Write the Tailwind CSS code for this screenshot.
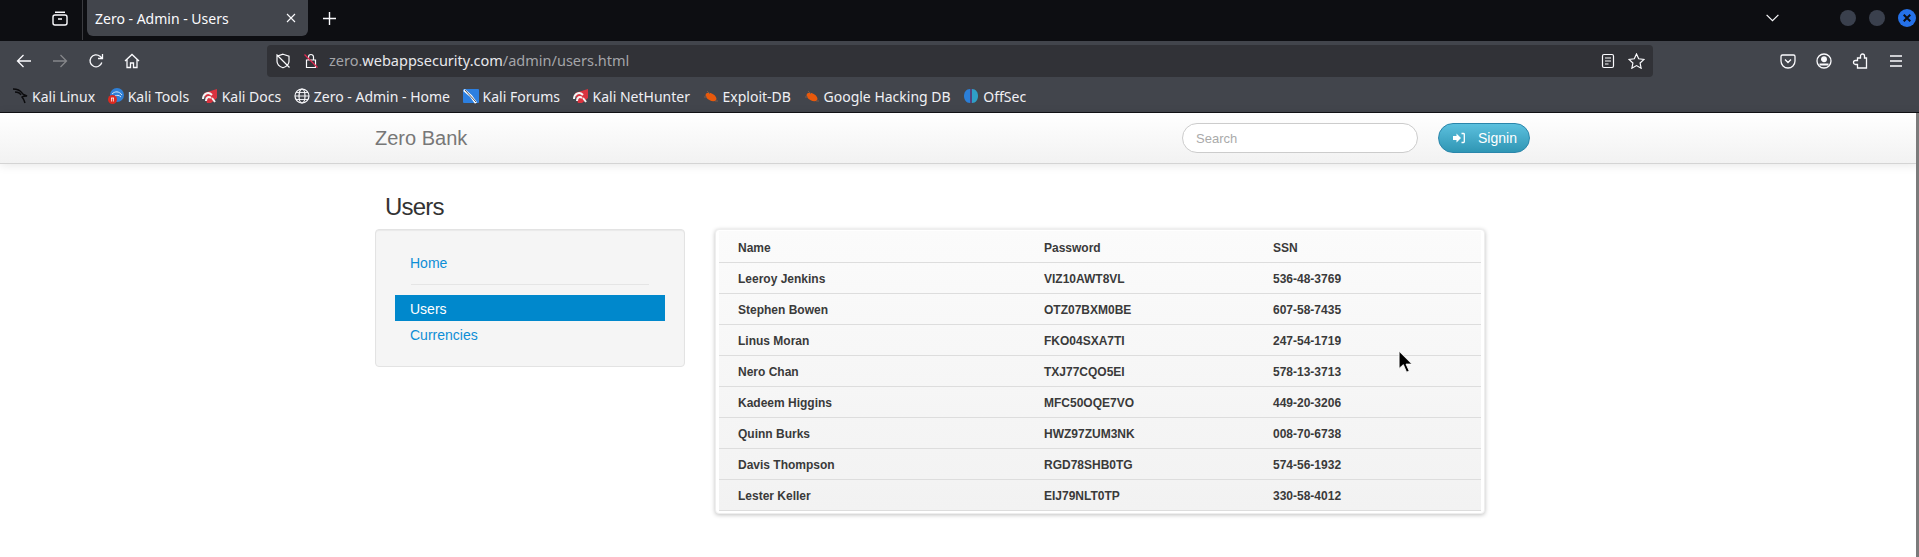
<!DOCTYPE html>
<html lang="en">
<head>
  <meta charset="UTF-8" />
  <title>Zero - Admin - Users</title>
  <script src="https://cdn.jsdelivr.net/npm/@tailwindcss/browser@4"></script>
</head>
<body class="relative h-[557px] overflow-hidden bg-white font-['Liberation_Sans',sans-serif]">
  <!-- TAB BAR -->
  <div class="flex h-[41px] items-start bg-[#0d0e12] font-['Noto_Sans',sans-serif] text-[#fbfbfe]">
    <div class="ml-[51px] mt-[9px] w-[18px]">
      <svg width="18" height="18" viewBox="0 0 18 18" fill="none" stroke="#fbfbfe" stroke-width="1.4"><rect x="2" y="6" width="14" height="10" rx="2"/><path d="M4 3.2h10M7 10h4"/></svg>
    </div>
    <div class="ml-[13px] h-[40px] w-px bg-[#3a3b40]"></div>
    <div class="ml-1 flex h-9 w-[221px] items-center justify-between rounded-b-md bg-[#42454c] pl-2 pr-3">
      <span class="text-[14px]">Zero - Admin - Users</span>
      <svg width="10" height="10" viewBox="0 0 10 10" stroke="#fbfbfe" stroke-width="1.1"><path d="M1 1l8 8M9 1l-8 8"/></svg>
    </div>
    <svg class="ml-[15px] mt-3" width="13" height="13" viewBox="0 0 13 13" stroke="#fbfbfe" stroke-width="1.4"><path d="M6.5 0v13M0 6.500h13"/></svg>
    <svg class="ml-[1430px] mt-[14px]" width="13" height="8" viewBox="0 0 13 8" fill="none" stroke="#fbfbfe" stroke-width="1.2"><path d="M.6.8l5.900 5.900L12.400.8"/></svg>
    <div class="ml-[61px] mt-[10px] flex gap-[13px]">
      <div class="size-4 rounded-full bg-[#3a404d]"></div>
      <div class="size-4 rounded-full bg-[#3a404d]"></div>
      <div class="flex size-[18px] -translate-y-px items-center justify-center rounded-full bg-[#2571e8]">
        <svg width="8" height="8" viewBox="0 0 8 8" stroke="#0d0e12" stroke-width="2"><path d="M.7.7l6.600 6.600M7.300.7L.7 7.300"/></svg>
      </div>
    </div>
  </div>

  <!-- TOOLBAR -->
  <div class="flex h-[38px] items-center bg-[#42454c] pt-[2px] font-['Noto_Sans',sans-serif]">
    <div class="ml-4 flex items-center gap-[20px]">
      <svg width="16" height="16" viewBox="0 0 16 16" fill="none" stroke="#fbfbfe" stroke-width="1.300"><path d="M15 8H1.500M7.500 2L1.500 8l6 6"/></svg>
      <svg width="16" height="16" viewBox="0 0 16 16" fill="none" stroke="#85868a" stroke-width="1.300"><path d="M1 8h13.500M8.500 2l6 6-6 6"/></svg>
      <svg width="16" height="16" viewBox="0 0 16 16" fill="none" stroke="#fbfbfe" stroke-width="1.300"><path d="M13.800 9.500A6 6 0 1 1 12 3.300L14.500 5.500M14.500 1v4.500H10"/></svg>
      <svg width="16" height="16" viewBox="0 0 16 16" fill="none" stroke="#fbfbfe" stroke-width="1.300"><path d="M1 8l7-6.500L15 8M3 6.500V14.500h3.500V10h3v4.500H13V6.500"/></svg>
    </div>
    <div class="ml-[127px] flex h-8 w-[1386px] items-center rounded bg-[#313237] pl-2 pr-2">
      <svg width="16" height="16" viewBox="0 0 16 16" fill="none" stroke="#fbfbfe" stroke-width="1.200"><path d="M8 1.200l6 2v5c0 3-2.500 5.300-6 6.600-3.500-1.300-6-3.600-6-6.600v-5zM1.500 1.500l13 13"/></svg>
      <svg class="ml-3" width="16" height="16" viewBox="0 0 16 16" fill="none" stroke-width="1.200"><path stroke="#fbfbfe" d="M3.500 7h9v7.500h-9zM5.500 7V4a2.500 2.500 0 0 1 5 0v3"/><path stroke="#e22850" d="M1.500 1.500l13 13"/></svg>
      <span class="ml-[10px] text-[14.500px] text-[#a4a5a9]">zero.<span class="text-[#e8e8ec]">webappsecurity.com</span>/admin/users.html</span>
      <div class="ml-auto flex items-center gap-[13px]">
        <svg width="14" height="16" viewBox="0 0 14 16" fill="none" stroke="#fbfbfe" stroke-width="1.200"><rect x="1.500" y="1.500" width="11" height="13" rx="1.500"/><path d="M4 5h6M4 8h6M4 11h3.500"/></svg>
        <svg width="17" height="16" viewBox="0 0 17 16" fill="none" stroke="#fbfbfe" stroke-width="1.200"><path d="M8.500 1l2.200 4.800 5.300.6-3.900 3.600 1 5.200-4.600-2.600-4.600 2.600 1-5.200L1 6.400l5.300-.6z"/></svg>
      </div>
    </div>
    <div class="ml-[127px] flex items-center gap-5">
      <svg width="16" height="16" viewBox="0 0 16 16" fill="none" stroke="#fbfbfe" stroke-width="1.300"><path d="M2.500 2h11A1.500 1.500 0 0 1 15 3.500V8a7 7 0 0 1-14 0V3.500A1.500 1.500 0 0 1 2.500 2zM5 6.500l3 3 3-3"/></svg>
      <svg width="16" height="16" viewBox="0 0 16 16" fill="none" stroke="#fbfbfe" stroke-width="1.300"><circle cx="8" cy="8" r="7"/><circle cx="8" cy="6.200" r="2.300" fill="#fbfbfe"/><path d="M3.500 11.500h9" stroke-width="2"/></svg>
      <svg width="16" height="16" viewBox="0 0 16 16" fill="none" stroke="#fbfbfe" stroke-width="1.300"><path d="M14.500 15H5.500v-3.500H3.500a2 2 0 0 1 0-4h2V5h3V3a2 2 0 0 1 4 0v2h2z"/></svg>
      <svg width="16" height="16" viewBox="0 0 16 16" stroke="#fbfbfe" stroke-width="1.300"><path d="M2 3h12M2 8h12M2 13h12"/></svg>
    </div>
  </div>

  <!-- BOOKMARKS -->
  <div class="flex h-[34px] items-center gap-[12.600px] border-b border-b-[#111216] bg-[#42454c] pt-px pl-3 font-['Noto_Sans',sans-serif] text-[14px] text-[#f0f0f4]">
    <div class="flex items-center gap-1">
      <svg width="16" height="16" viewBox="0 0 16 16" fill="none" stroke="#0b0b0d" stroke-width="1.500"><path d="M1 1c4 0 7 1 9 4 1 2 3 2 5 3-2 0-4 0-5 1 1 1 2 3 3 6M3 4c3 0 5 1 6 3"/></svg>
      <span>Kali Linux</span>
    </div>
    <div class="flex items-center gap-1">
      <svg width="16" height="16" viewBox="0 0 16 16"><circle cx="9" cy="7" r="7" fill="#2f80d8"/><path d="M4 6c3-3 7-3 10 1M7 8c2-1 4-1 6 1" fill="none" stroke="#dbe9f7" stroke-width="1"/><circle cx="4.500" cy="11.500" r="4.500" fill="#dc2a20"/><path d="M3 10h3M3.600 10v3.500M5.400 10v3.500" stroke="#fff" stroke-width=".8"/></svg>
      <span>Kali Tools</span>
    </div>
    <div class="flex items-center gap-1">
      <svg width="16" height="16" viewBox="0 0 16 16"><path d="M2 5L15 1v9l-6 5H5z" fill="#d9333f"/><path d="M1 11c0-5 5-8 9-4M4 13c0-4 3-5 5-3M10 10l3 4" fill="none" stroke="#f4f4f4" stroke-width="2"/></svg>
      <span>Kali Docs</span>
    </div>
    <div class="flex items-center gap-1">
      <svg width="16" height="16" viewBox="0 0 16 16" fill="none" stroke="#fbfbfe" stroke-width="1.200"><circle cx="8" cy="8" r="7"/><ellipse cx="8" cy="8" rx="3" ry="7"/><path d="M1 8h14M2 4.500h12M2 11.500h12" stroke-width=".9"/></svg>
      <span>Zero - Admin - Home</span>
    </div>
    <div class="flex items-center gap-1">
      <svg width="16" height="16" viewBox="0 0 16 16"><rect y="1" width="16" height="14" rx="1" fill="#2c7fe0"/><path d="M1 2l7 6 5 7" fill="none" stroke="#fff" stroke-width="2.500"/><path d="M2 2l11 12" stroke="#23252b" stroke-width=".8"/></svg>
      <span>Kali Forums</span>
    </div>
    <div class="flex items-center gap-1">
      <svg width="16" height="16" viewBox="0 0 16 16"><path d="M2 5L15 1v9l-6 5H5z" fill="#d9333f"/><path d="M1 11c0-5 5-8 9-4M4 13c0-4 3-5 5-3M10 10l3 4" fill="none" stroke="#f4f4f4" stroke-width="2"/></svg>
      <span>Kali NetHunter</span>
    </div>
    <div class="flex items-center gap-1">
      <svg width="16" height="16" viewBox="0 0 16 16"><ellipse cx="8" cy="9" rx="6" ry="3.500" transform="rotate(30 8 9)" fill="#e8590c"/><path d="M1 9h3M12 13l3 0M4 3l3 3" stroke="#7d5a48" stroke-width="1"/></svg>
      <span>Exploit-DB</span>
    </div>
    <div class="flex items-center gap-1">
      <svg width="16" height="16" viewBox="0 0 16 16"><ellipse cx="8" cy="9" rx="6" ry="3.500" transform="rotate(30 8 9)" fill="#e8590c"/><path d="M1 9h3M12 13l3 0M4 3l3 3" stroke="#7d5a48" stroke-width="1"/></svg>
      <span>Google Hacking DB</span>
    </div>
    <div class="flex items-center gap-1">
      <svg width="16" height="16" viewBox="0 0 16 16"><path d="M7 1C3 1 1 4.500 1 8s2 7 6 7z" fill="#2b7fd8"/><path d="M9 1c4 0 6 3.500 6 7s-2 7-6 7z" fill="#2f9fc8"/><path d="M7.600 1h.8v14h-.8z" fill="#6a3fc8"/></svg>
      <span>OffSec</span>
    </div>
  </div>

  <!-- PAGE HEADER -->
  <header class="h-[51px] border-b border-b-[#d4d4d4] bg-gradient-to-b from-white to-[#f2f2f2] shadow-[0_1px_10px_rgba(0,0,0,0.1)]">
    <div class="ml-[375px] flex h-[50px] w-[1155px] items-center">
      <span class="text-[20px] text-[#777]">Zero Bank</span>
      <input class="ml-auto h-[30px] w-[236px] rounded-[15px] border border-[#ccc] bg-white px-[13px] text-[13px] placeholder:text-[#aaa]" placeholder="Search" />
      <button class="ml-5 flex h-[30px] w-[92px] items-center rounded-[15px] border border-[#2a86ab] bg-gradient-to-b from-[#5bc0de] to-[#2f96b4] pl-[14px] text-[14px] text-white">
        <svg width="12" height="12" viewBox="0 0 12 12" fill="#fff"><path d="M0 4h3.500V1.500L8 6l-4.500 4.500V8H0z"/><path d="M8.500 1.500h2A.8.8 0 0 1 11.300 2.300v7.400a.8.8 0 0 1-.8.8h-2" fill="none" stroke="#fff" stroke-width="1.300"/></svg>
        <span class="ml-[13px]">Signin</span>
      </button>
    </div>
  </header>

  <!-- MAIN -->
  <main class="ml-[375px] w-[1110px]">
    <h1 class="mt-[29px] h-[36px] pl-[10px] text-[24px] leading-[28px] tracking-[-0.8px] text-[#333]">Users</h1>
    <div class="flex items-start gap-[30px]">
      <aside class="h-[138px] w-[310px] rounded border border-[#e3e3e3] bg-[#f5f5f5] p-[19px] text-[14px] leading-5 shadow-[inset_0_1px_1px_rgba(0,0,0,0.05)]">
        <a class="block pl-[15px] pt-[4px] text-[#0d8ed6]" href="#">Home</a>
        <div class="mx-4 mb-[10px] mt-[11px] h-px bg-[#e5e5e5]"></div>
        <a class="block h-[26px] bg-[#0088cc] pl-[15px] pt-[4px] text-white" href="#">Users</a>
        <a class="block pl-[15px] pt-[4px] text-[#0d8ed6]" href="#">Currencies</a>
      </aside>
      <div class="h-[285px] w-[770px] rounded border border-[#eee] bg-white px-[3px] pt-px shadow-[0_1px_4px_rgba(0,0,0,0.25)]">
        <table class="w-full table-fixed bg-gradient-to-b from-[#fbfbfb] to-[#f2f2f2] text-left text-[12px] font-bold text-[#3a3a3a]">
          <thead>
            <tr class="h-[31px] border-b border-b-[#ddd]"><th class="w-[325px] pl-[19px] pt-[4px]">Name</th><th class="w-[229px] pt-[4px]">Password</th><th class="pt-[4px]">SSN</th></tr>
          </thead>
          <tbody>
            <tr class="h-[31px] border-b border-b-[#ddd]"><td class="pl-[19px] pt-[2px]">Leeroy Jenkins</td><td class="pt-[2px]">VIZ10AWT8VL</td><td class="pt-[2px]">536-48-3769</td></tr>
            <tr class="h-[31px] border-b border-b-[#ddd]"><td class="pl-[19px] pt-[2px]">Stephen Bowen</td><td class="pt-[2px]">OTZ07BXM0BE</td><td class="pt-[2px]">607-58-7435</td></tr>
            <tr class="h-[31px] border-b border-b-[#ddd]"><td class="pl-[19px] pt-[2px]">Linus Moran</td><td class="pt-[2px]">FKO04SXA7TI</td><td class="pt-[2px]">247-54-1719</td></tr>
            <tr class="h-[31px] border-b border-b-[#ddd]"><td class="pl-[19px] pt-[2px]">Nero Chan</td><td class="pt-[2px]">TXJ77CQO5EI</td><td class="pt-[2px]">578-13-3713</td></tr>
            <tr class="h-[31px] border-b border-b-[#ddd]"><td class="pl-[19px] pt-[2px]">Kadeem Higgins</td><td class="pt-[2px]">MFC50OQE7VO</td><td class="pt-[2px]">449-20-3206</td></tr>
            <tr class="h-[31px] border-b border-b-[#ddd]"><td class="pl-[19px] pt-[2px]">Quinn Burks</td><td class="pt-[2px]">HWZ97ZUM3NK</td><td class="pt-[2px]">008-70-6738</td></tr>
            <tr class="h-[31px] border-b border-b-[#ddd]"><td class="pl-[19px] pt-[2px]">Davis Thompson</td><td class="pt-[2px]">RGD78SHB0TG</td><td class="pt-[2px]">574-56-1932</td></tr>
            <tr class="h-[31px] border-b border-b-[#ddd]"><td class="pl-[19px] pt-[2px]">Lester Keller</td><td class="pt-[2px]">EIJ79NLT0TP</td><td class="pt-[2px]">330-58-4012</td></tr>
          </tbody>
        </table>
      </div>
    </div>
  </main>

  <!-- SCROLLBAR + CURSOR -->
  <div class="absolute bottom-0 right-0 top-[113px] w-[3px] bg-[#7b7b7b]"></div>
  <svg class="absolute left-[1398px] top-[350px]" width="15" height="25" viewBox="0 0 14 23"><path d="M1 1v16l4-3.500 3 7 2.500-1-3-6.500H13z" fill="#000" stroke="#fff" stroke-width=".8"/></svg>
</body>
</html>
